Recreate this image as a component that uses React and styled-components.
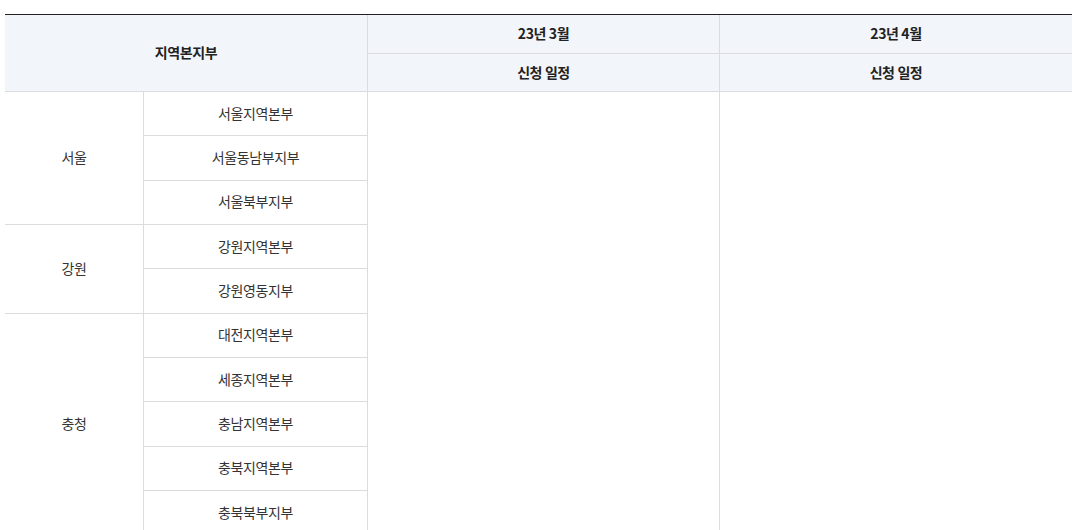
import React from "react";
import styled, { createGlobalStyle } from "styled-components";

const Global = createGlobalStyle`
  html, body { margin: 0; padding: 0; background: #fff; }
  body { font-family: "Noto Sans CJK KR", "Noto Sans", sans-serif; overflow: hidden; }
`;

const Wrap = styled.div`
  padding: 14px 0 0 5px;
`;

const Table = styled.table`
  width: 1067px;
  table-layout: fixed;
  border-collapse: separate;
  border-spacing: 0;
  border-top: 1px solid #222;
  font-size: 14px;
  letter-spacing: -0.4px;
`;

const Th = styled.th`
  background: #f2f5fa;
  color: #222;
  font-weight: 700;
  padding: 0 0 2px;
  text-align: center;
  height: ${(p) => p.$h - 2}px;
  border-bottom: ${(p) => (p.$noBottom ? "0" : "1px solid #dcdcdc")};
  border-left: ${(p) => (p.$left ? "1px solid #dcdcdc" : "0")};
`;

const Td = styled.td`
  color: #333;
  padding: 0 0 2px;
  text-align: center;
  vertical-align: middle;
  height: 41.33px;
  border-bottom: ${(p) => (p.$noBottom ? "0" : "1px solid #dcdcdc")};
  border-left: ${(p) => (p.$left ? "1px solid #dcdcdc" : "0")};
`;

const groups = [
  { name: "서울", items: ["서울지역본부", "서울동남부지부", "서울북부지부"] },
  { name: "강원", items: ["강원지역본부", "강원영동지부"] },
  { name: "충청", items: ["대전지역본부", "세종지역본부", "충남지역본부", "충북지역본부", "충북북부지부"] },
];

const total = groups.reduce((s, g) => s + g.items.length, 0);

export default function App() {
  let first = true;
  return (
    <>
      <Global />
      <Wrap>
        <Table>
          <colgroup>
            <col style={{ width: 138 }} />
            <col style={{ width: 224 }} />
            <col style={{ width: 352 }} />
            <col style={{ width: 353 }} />
          </colgroup>
          <thead>
            <tr>
              <Th colSpan={2} rowSpan={2} $h={76}>지역본지부</Th>
              <Th $left $h={38}>23년 3월</Th>
              <Th $left $h={38}>23년 4월</Th>
            </tr>
            <tr>
              <Th $left $h={37}>신청 일정</Th>
              <Th $left $h={37}>신청 일정</Th>
            </tr>
          </thead>
          <tbody>
            {groups.map((g, gi) =>
              g.items.map((it, i) => {
                const isFirstRow = first;
                first = false;
                return (
                  <tr key={it}>
                    {i === 0 && (
                      <Td rowSpan={g.items.length} $noBottom={gi === groups.length - 1}>
                        {g.name}
                      </Td>
                    )}
                    <Td $left>{it}</Td>
                    {isFirstRow && (
                      <>
                        <Td $left rowSpan={total} $noBottom />
                        <Td $left rowSpan={total} $noBottom />
                      </>
                    )}
                  </tr>
                );
              })
            )}
          </tbody>
        </Table>
      </Wrap>
    </>
  );
}
